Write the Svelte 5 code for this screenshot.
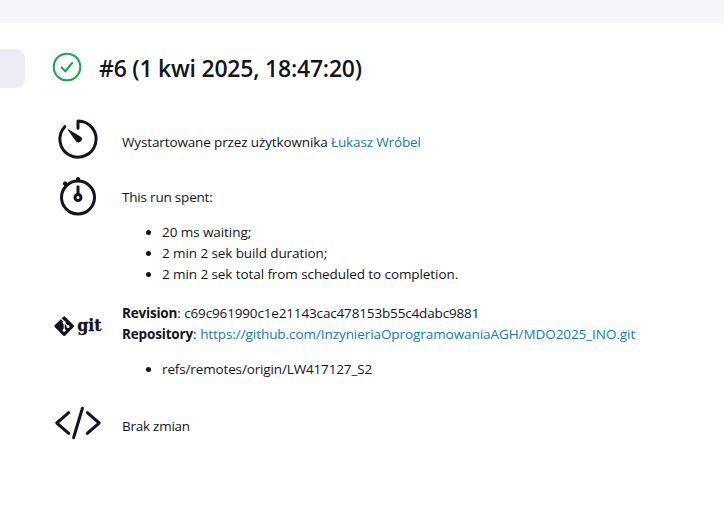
<script>
  const timings = [
    { text: '20 ms waiting;', spacing: -0.07 },
    { text: '2 min 2 sek build duration;', spacing: -0.09 },
    { text: '2 min 2 sek total from scheduled to completion.', spacing: -0.085 }
  ];
</script>

<div class="page">
  <header></header>
  <div class="body">
    <aside><div class="tab"></div></aside>
    <main>
      <div class="title">
        <svg width="30" height="30" viewBox="0 0 30 30" fill="none" stroke="#1ea64b" stroke-width="2.1" stroke-linecap="round" stroke-linejoin="round">
          <circle cx="15" cy="15" r="13.3" />
          <path d="M9.7 15.4l3.6 4 6.8-8.4" />
        </svg>
        <h1>#6 (1 kwi 2025, 18:47:20)</h1>
      </div>

      <section class="cause">
        <svg width="48" height="48" viewBox="0 0 48 48" fill="none" stroke="#14141f" stroke-width="3" stroke-linecap="round" stroke-linejoin="round">
          <path d="M24 13.2V6a18.1 18.1 0 1 1-13.2 5.7" />
          <path d="M14.6 15L26.7 22.2a2.9 2.9 0 1 1-4.5 3.8z" fill="#14141f" stroke-width="1" />
        </svg>
        <p><span class="started">Wystartowane przez użytkownika</span> <a class="user" href="#user">Łukasz Wróbel</a></p>
      </section>

      <section class="timing">
        <svg width="48" height="48" viewBox="0 0 48 48" fill="none" stroke="#14141f" stroke-width="3" stroke-linecap="round">
          <circle cx="24" cy="24.5" r="16.5" />
          <circle cx="24" cy="24.5" r="3" />
          <path d="M24 21V13.7" />
          <path d="M24 6v1.2M11 10.6l1.2 1.2" stroke-width="4.2" />
        </svg>
        <div>
          <p class="spent">This run spent:</p>
          <ul>
            {#each timings as t}
              <li style:letter-spacing="{t.spacing}px">{t.text}</li>
            {/each}
          </ul>
        </div>
      </section>

      <section class="git">
        <svg width="48" height="48" viewBox="0 0 48 48">
          <rect x="2.9" y="16.9" width="14.6" height="14.6" rx="1.2" fill="#14141f" transform="rotate(45 10.2 24.2)" />
          <path d="M7.2 16.6l3 3v9M10.2 20.6l4 4" stroke="#fff" stroke-width="1.1" fill="none" />
          <circle cx="10.2" cy="20.6" r="1.5" fill="#fff" />
          <circle cx="10.2" cy="28.2" r="1.5" fill="#fff" />
          <circle cx="14" cy="24.4" r="1.5" fill="#fff" />
          <text x="23.2" y="29" textLength="24.4" lengthAdjust="spacingAndGlyphs">git</text>
        </svg>
        <div>
          <p><b class="revision">Revision</b>: <span class="hash">c69c961990c1e21143cac478153b55c4dabc9881</span></p>
          <p><b class="repository">Repository</b>: <a class="url" href="#repo">https://github.com/InzynieriaOprogramowaniaAGH/MDO2025_INO.git</a></p>
          <ul><li class="ref">refs/remotes/origin/LW417127_S2</li></ul>
        </div>
      </section>

      <section class="changes">
        <svg width="48" height="48" viewBox="0 0 48 48" fill="none" stroke="#14141f" stroke-width="3" stroke-linecap="round" stroke-linejoin="round">
          <path d="M14.7 13.7L2.8 24l11.9 10.3M33.3 13.7L45.2 24 33.3 34.3M28.4 9.2l-8.8 29.6" />
        </svg>
        <p class="none">Brak zmian</p>
      </section>
    </main>
  </div>
</div>

<style>
  :global(body) { background: #fff; }
  .page {
    height: 506px;
    overflow: hidden;
    background: #fff;
    color: #14141f;
    font: 13.5px/21px "Segoe UI", "Open Sans", "Noto Sans", sans-serif;
  }
  header { height: 23px; background: #f4f4fa; }
  .body { display: flex; }
  aside { width: 52px; padding-top: 26px; }
  .tab { width: 25px; height: 39px; background: #ececf5; border-radius: 0 9px 9px 0; }
  main { flex: 1; padding-top: 29px; }
  .title { display: flex; align-items: center; height: 30px; gap: 17px; }
  h1 { margin: 1px 0 0; font-size: 23px; font-weight: 600; line-height: 30px; letter-spacing: -0.22px; white-space: nowrap; }
  section { display: flex; gap: 20px; margin-left: 2px; white-space: nowrap; }
  svg { flex: none; overflow: visible; }
  p { margin: 0; }
  a { color: #1176d8; text-decoration: none; }
  b { font-weight: 700; }
  ul { margin: 14px 0 0; padding: 0 0 0 40px; }
  text { font: 700 17.5px "DejaVu Serif", serif; fill: #14141f; stroke: #14141f; stroke-width: 0.3px; }
  .started { letter-spacing: -0.13px; }
  .user { letter-spacing: -0.14px; }
  .spent { letter-spacing: -0.2px; }
  .revision { letter-spacing: -0.2px; }
  .repository { letter-spacing: -0.16px; }
  .hash { letter-spacing: -0.15px; }
  .url { letter-spacing: -0.07px; }
  .ref { letter-spacing: -0.14px; }
  .none { letter-spacing: -0.25px; }
  .cause { margin-top: 33px; height: 58px; }
  .cause p { padding-top: 17px; }
  .timing { height: 130px; }
  .timing > div { padding-top: 14px; }
  .git { height: 96px; }
  .git svg { margin-top: -1px; }
  .changes { height: 48px; }
  .changes p { padding-top: 17px; }
</style>
